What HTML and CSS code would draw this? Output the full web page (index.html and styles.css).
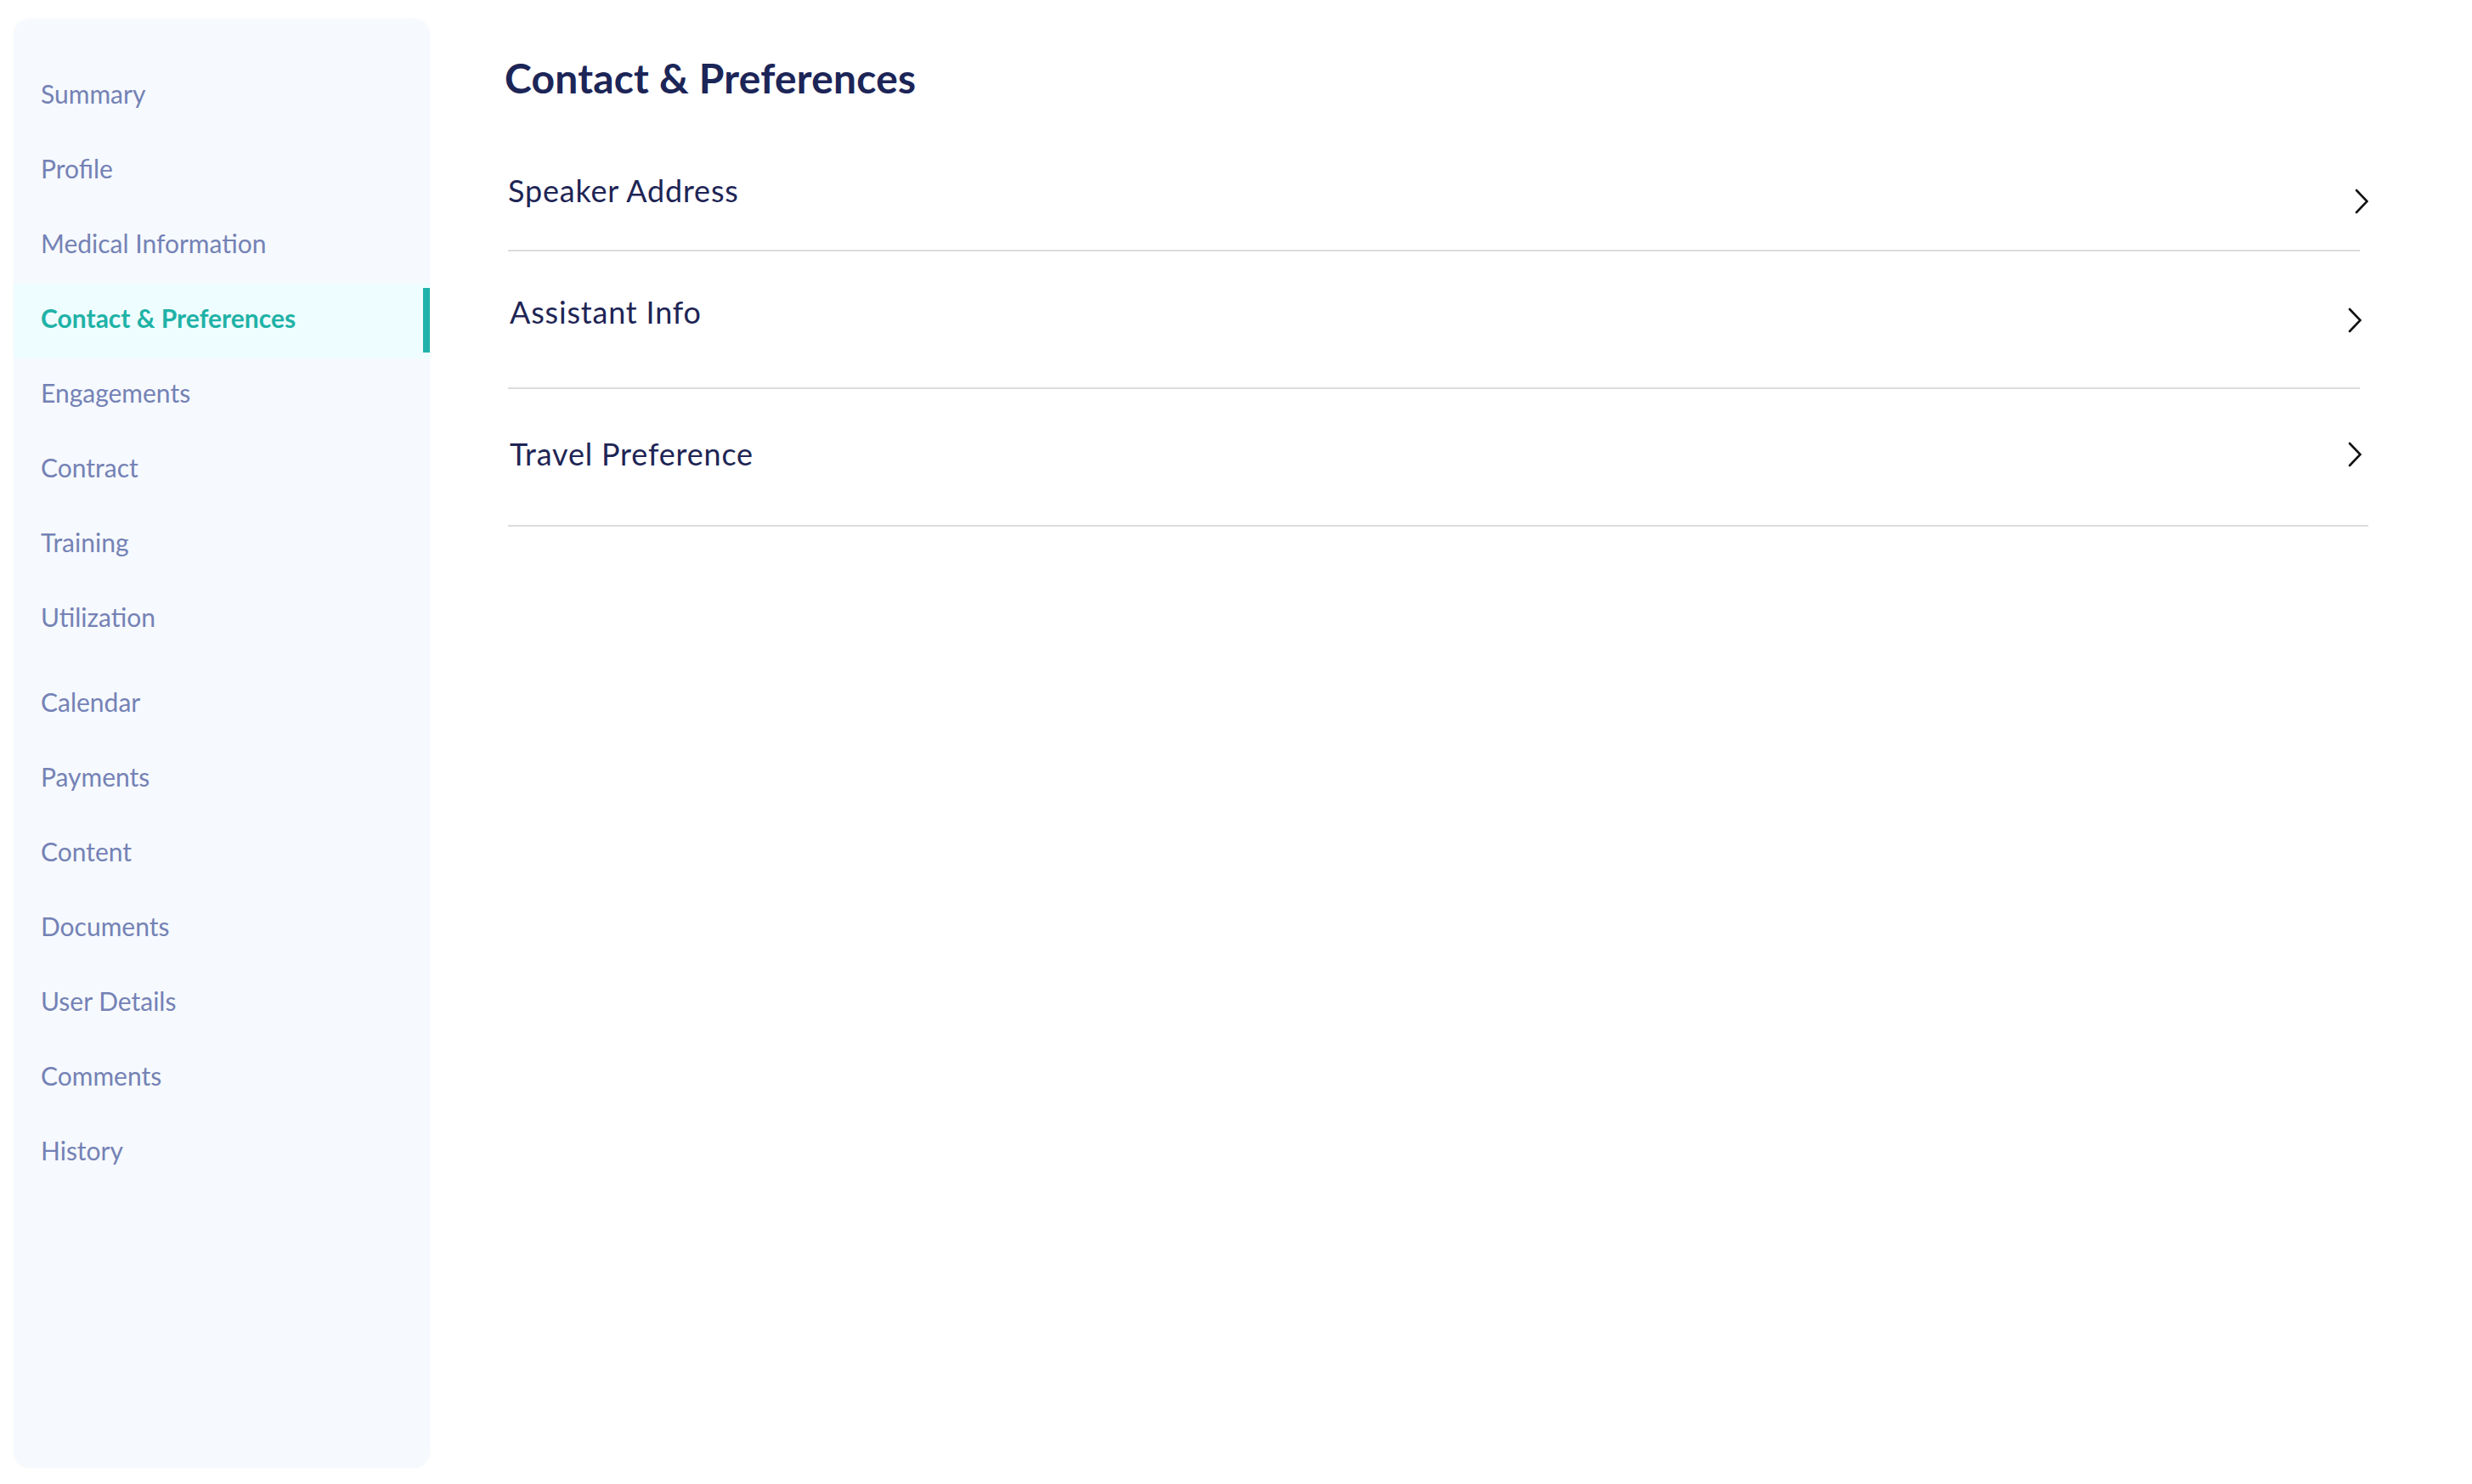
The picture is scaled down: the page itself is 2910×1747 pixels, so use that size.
FILE: index.html
```html
<!DOCTYPE html>
<html lang="en">
<head>
<meta charset="utf-8">
<title>Contact &amp; Preferences</title>
<link rel="stylesheet" href="styles.css">
</head>
<body>
<div class="page">
  <nav class="sidebar">
    <ul class="nav-group">
      <li class="nav-item">Summary</li>
      <li class="nav-item">Profile</li>
      <li class="nav-item">Medical Information</li>
      <li class="nav-item nav-item--active">Contact &amp; Preferences</li>
      <li class="nav-item">Engagements</li>
      <li class="nav-item">Contract</li>
      <li class="nav-item">Training</li>
      <li class="nav-item">Utilization</li>
    </ul>
    <ul class="nav-group nav-group--second">
      <li class="nav-item">Calendar</li>
      <li class="nav-item">Payments</li>
      <li class="nav-item">Content</li>
      <li class="nav-item">Documents</li>
      <li class="nav-item">User Details</li>
      <li class="nav-item">Comments</li>
      <li class="nav-item">History</li>
    </ul>
  </nav>
  <main class="main">
    <h1 class="title">Contact &amp; Preferences</h1>
    <div class="row row--address">
      <span class="row-title">Speaker Address</span>
      <svg class="chevron" viewBox="0 0 16 30" width="16" height="30"><path d="M2 2 L14.5 15 L2 28" /></svg>
    </div>
    <div class="row row--assistant">
      <span class="row-title row-title--inset">Assistant Info</span>
      <svg class="chevron" viewBox="0 0 16 30" width="16" height="30"><path d="M2 2 L14.5 15 L2 28" /></svg>
    </div>
    <div class="row row--travel">
      <span class="row-title row-title--inset">Travel Preference</span>
      <svg class="chevron" viewBox="0 0 16 30" width="16" height="30"><path d="M2 2 L14.5 15 L2 28" /></svg>
    </div>
  </main>
</div>
</body>
</html>
```

FILE: styles.css
```css
* {
  box-sizing: border-box;
}

html, body {
  margin: 0;
  padding: 0;
  background: #ffffff;
}

body {
  font-family: "Lato", "Noto Sans", sans-serif;
  width: 2910px;
  height: 1747px;
  overflow: hidden;
}

.page {
  display: flex;
  align-items: flex-start;
}

.sidebar {
  width: 490px;
  height: 1706px;
  margin: 22px 0 0 16px;
  padding-top: 48px;
  background: #f6f9fe;
  border-radius: 20px;
  box-shadow: 0 0 3px rgba(40, 60, 110, 0.05);
  flex-shrink: 0;
}

.nav-group {
  list-style: none;
  margin: 0;
  padding: 0;
}

.nav-group--second {
  margin-top: 12px;
}

.nav-item {
  position: relative;
  height: 88px;
  padding: 22px 0 30px 32px;
  font-size: 30px;
  line-height: 36px;
  color: #7482b5;
  white-space: nowrap;
}

.nav-item--active {
  color: #1fb2a7;
  font-weight: 700;
  background: #eefdff;
}

.nav-item--active::after {
  content: "";
  position: absolute;
  right: 0;
  top: 5px;
  bottom: 7px;
  width: 8px;
  background: #20b2aa;
}

.main {
  flex: 1;
  padding: 63px 0 0 88px;
}

.title {
  margin: 0;
  font-size: 48px;
  line-height: 58px;
  font-weight: 700;
  color: #1c2557;
  letter-spacing: 0.2px;
}

.row {
  display: flex;
  align-items: flex-start;
  justify-content: space-between;
  margin-left: 4px;
  border-bottom: 2px solid #dcdcdc;
}

.row-title {
  font-size: 36px;
  line-height: 44px;
  color: #1e2555;
  letter-spacing: 0.8px;
}

.row-title--inset {
  padding-left: 2px;
}

.chevron {
  display: block;
  flex-shrink: 0;
}

.chevron path {
  fill: none;
  stroke: #111111;
  stroke-width: 2.6;
  stroke-linecap: round;
  stroke-linejoin: miter;
}

.row--address {
  width: 2180px;
  padding: 81px 0 42px 0;
}

.row--address .chevron {
  margin: 20px -10px 0 0;
}

.row--assistant {
  width: 2180px;
  padding: 49px 0 64px 0;
}

.row--assistant .chevron {
  margin: 17px -2px 0 0;
}

.row--travel {
  width: 2190px;
  padding: 54px 0 62px 0;
}

.row--travel .chevron {
  margin: 8px 8px 0 0;
}
```
